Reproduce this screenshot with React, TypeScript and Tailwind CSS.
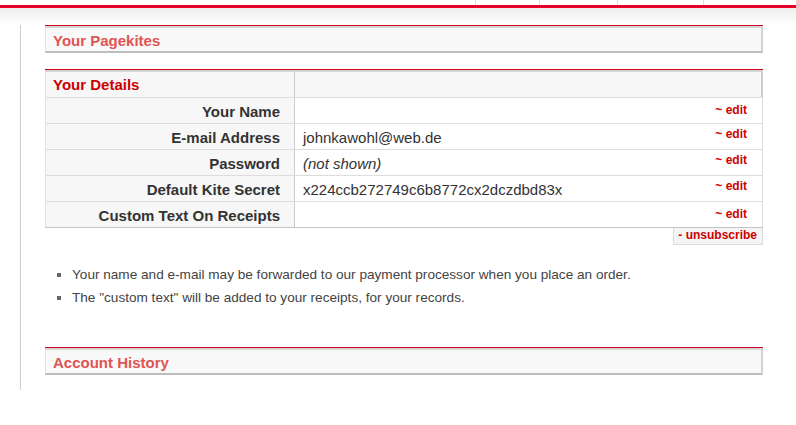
import React from "react";

const rows: { label: string; value?: string; italic?: boolean }[] = [
  { label: "Your Name" },
  { label: "E-mail Address", value: "johnkawohl@web.de" },
  { label: "Password", value: "(not shown)", italic: true },
  { label: "Default Kite Secret", value: "x224ccb272749c6b8772cx2dczdbd83x" },
  { label: "Custom Text On Receipts" },
];

function SectionBox({ title }: { title: string }) {
  return (
    <div className="border-t border-[#d0021b]">
      <div className="h-[27px] border-t-2 border-t-[#d6d6d6] border-l border-l-[#e2e2e2] border-r-2 border-r-[#d2d2d2] border-b-2 border-b-[#bdbdbd] bg-[#f9f9f9] pl-[7px] pt-[3px]">
        <h2 className="text-[15px] leading-[20px] font-bold text-[#e05454]">{title}</h2>
      </div>
    </div>
  );
}

export default function App() {
  return (
    <div className="w-[796px] h-[425px] bg-white overflow-hidden font-['Liberation_Sans',Arial,sans-serif]">
      <div className="flex h-[5px]">
        <div className="w-[475px]" />
        <div className="w-[64px] border-l border-[#dddddd]" />
        <div className="w-[78px] border-l border-[#dddddd]" />
        <div className="w-[86px] border-l border-[#dddddd]" />
        <div className="flex-1 border-l border-[#dddddd]" />
      </div>
      <div className="h-[3px] bg-[#e6002a]" />
      <div className="h-[17px] bg-linear-to-b from-[#eeeeee] to-white" />
      <div className="ml-[20px] h-[365px] border-l border-[#cccccc] pl-[24px]">
        <div className="w-[718px] flex flex-col">
          <SectionBox title="Your Pagekites" />

          <div className="mt-[16px] border-t border-[#d0021b]">
            <div className="border-t-2 border-t-[#d6d6d6]">
              <div className="flex h-[26px] border-b border-[#dddddd]">
                <div className="w-[250px] bg-[#f7f7f7] border-l border-l-[#e2e2e2] border-r border-r-[#cccccc] pl-[7px] pt-[2px] text-[15px] leading-[22px]">
                  <span className="font-bold text-[#cc0000]">Your Details</span>
                </div>
                <div className="flex-1 bg-[#f7f7f7] border-r-2 border-r-[#cccccc]" />
              </div>
              {rows.map((r, i) => (
                <div
                  key={r.label}
                  className={
                    "flex h-[26px] border-b " +
                    (i === rows.length - 1 ? "border-[#c4c4c4]" : "border-[#dddddd]")
                  }
                >
                  <div className="w-[250px] bg-[#f7f7f7] border-l border-l-[#e2e2e2] border-r border-r-[#cccccc] pr-[14px] pt-[3px] text-right text-[15px] leading-[22px]">
                    <span className="font-bold text-[#333333]">{r.label}</span>
                  </div>
                  <div className="flex-1 flex items-start bg-white border-r border-r-[#dddddd] pl-[8px] pr-[15px]">
                    <span
                      className={
                        "pt-[3px] text-[15px] leading-[22px] text-[#333333] " + (r.italic ? "italic" : "")
                      }
                    >
                      {r.value ?? ""}
                    </span>
                    <a
                      className={
                        "ml-auto text-[12px] leading-[12px] font-bold text-[#cc0000] " +
                        (r.value ? "mt-[4px]" : "mt-[6px]")
                      }
                    >
                      ~ edit
                    </a>
                  </div>
                </div>
              ))}
            </div>
          </div>

          <div className="self-end w-[90px] h-[17px] border border-t-0 border-[#dddddd] bg-[#f4f4f4] pr-[5px] text-right text-[12px] leading-[15px] font-bold text-[#cc0000]">
            - unsubscribe
          </div>

          <ul className="mt-[18px] text-[13.6px] leading-[23px] text-[#444444]">
            <li className="flex items-start">
              <span className="ml-[12px] mt-[10px] w-[4px] h-[4px] bg-[#666666] shrink-0" />
              <span className="ml-[11px]">
                Your name and e-mail may be forwarded to our payment processor when you place an order.
              </span>
            </li>
            <li className="flex items-start">
              <span className="ml-[12px] mt-[10px] w-[4px] h-[4px] bg-[#666666] shrink-0" />
              <span className="ml-[11px]">The "custom text" will be added to your receipts, for your records.</span>
            </li>
          </ul>

          <div className="mt-[38px]">
            <SectionBox title="Account History" />
          </div>
        </div>
      </div>
    </div>
  );
}
